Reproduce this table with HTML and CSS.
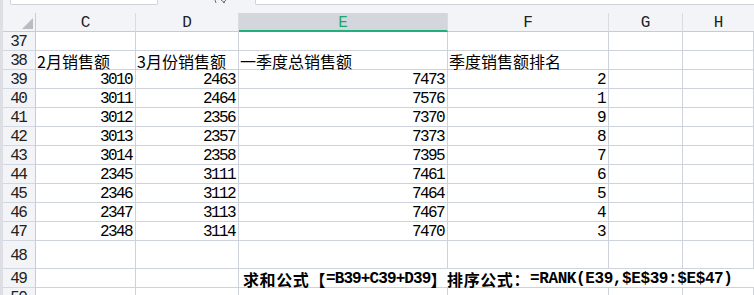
FILE: index.html
```html
<!DOCTYPE html>
<html lang="zh-CN">
<head>
<meta charset="utf-8">
<title>Sheet</title>
<link rel="stylesheet" href="styles.css">
</head>
<body>
<div class="app">
  <div class="topbar">
    <div class="namebox"></div>
    <div class="fx"><svg width="16" height="4" viewBox="0 0 16 4"><path d="M2 0 L3 3 M8 0 L12 3 M13 0 L10 3" stroke="#6b6f78" stroke-width="1" fill="none"/></svg></div>
    <div class="formula"></div>
  </div>
  <div class="sheet">
    <div class="corner"><svg width="11" height="11" viewBox="0 0 11 11"><polygon points="11,0 11,11 0,11" fill="#b9bcc4"/></svg></div>
    <div class="ch">C</div><div class="ch">D</div><div class="ch sel">E</div><div class="ch">F</div><div class="ch">G</div><div class="ch last">H</div>

    <div class="rh">37</div><div class="c"></div><div class="c"></div><div class="c"></div><div class="c"></div><div class="c"></div><div class="c"></div>

    <div class="rh">38</div><div class="c t">2月销售额</div><div class="c t">3月份销售额</div><div class="c t">一季度总销售额</div><div class="c t">季度销售额排名</div><div class="c"></div><div class="c"></div>

    <div class="rh">39</div><div class="c n">3010</div><div class="c n">2463</div><div class="c n">7473</div><div class="c n">2</div><div class="c"></div><div class="c"></div>
    <div class="rh">40</div><div class="c n">3011</div><div class="c n">2464</div><div class="c n">7576</div><div class="c n">1</div><div class="c"></div><div class="c"></div>
    <div class="rh">41</div><div class="c n">3012</div><div class="c n">2356</div><div class="c n">7370</div><div class="c n">9</div><div class="c"></div><div class="c"></div>
    <div class="rh">42</div><div class="c n">3013</div><div class="c n">2357</div><div class="c n">7373</div><div class="c n">8</div><div class="c"></div><div class="c"></div>
    <div class="rh">43</div><div class="c n">3014</div><div class="c n">2358</div><div class="c n">7395</div><div class="c n">7</div><div class="c"></div><div class="c"></div>
    <div class="rh">44</div><div class="c n">2345</div><div class="c n">3111</div><div class="c n">7461</div><div class="c n">6</div><div class="c"></div><div class="c"></div>
    <div class="rh">45</div><div class="c n">2346</div><div class="c n">3112</div><div class="c n">7464</div><div class="c n">5</div><div class="c"></div><div class="c"></div>
    <div class="rh">46</div><div class="c n">2347</div><div class="c n">3113</div><div class="c n">7467</div><div class="c n">4</div><div class="c"></div><div class="c"></div>
    <div class="rh">47</div><div class="c n">2348</div><div class="c n">3114</div><div class="c n">7470</div><div class="c n">3</div><div class="c"></div><div class="c"></div>

    <div class="rh">48</div><div class="c"></div><div class="c"></div><div class="c"></div><div class="c"></div><div class="c"></div><div class="c"></div>

    <div class="rh">49</div><div class="c"></div><div class="c"></div>
    <div class="c formula-note"><span class="zh">求和公式【</span><span class="en">=B39+C39+D39</span><span class="zh">】排序公式：</span><span class="en wide">=RANK(E39,$E$39:$E$47)</span></div>

    <div class="rh">50</div><div class="c"></div><div class="c"></div><div class="c"></div><div class="c"></div><div class="c"></div><div class="c"></div>
  </div>
</div>
</body>
</html>
```

FILE: styles.css
```css
* { box-sizing: border-box; }
html, body { margin: 0; padding: 0; background: #ffffff; overflow: hidden; }
body { width: 754px; height: 295px; }

.app {
  border-left: 3px solid #dddfe4;
  height: 295px;
  overflow: hidden;
  font-family: "Noto Sans CJK SC", sans-serif;
  color: #000;
}

.topbar {
  height: 13px;
  background: #f3f4f7;
  display: flex;
  align-items: flex-start;
}
.namebox {
  margin-left: 7px;
  width: 148px;
  height: 5px;
  background: #fff;
  border: 1px solid #cfd2d9;
  border-top: none;
  border-radius: 0 0 2px 2px;
}
.fx {
  margin-left: 55px;
  width: 16px;
  height: 4px;
  display: flex;
}
.formula {
  margin-left: 26px;
  flex: 1;
  height: 5px;
  background: #fff;
  border: 1px solid #cfd2d9;
  border-top: none;
  border-right: none;
  border-radius: 0 0 0 2px;
}

.sheet {
  display: grid;
  grid-template-columns: 33px 100px 103px 209px 161px 74px 1fr;
  grid-template-rows: repeat(12, 19px) 28px 19px 19px;
}

.corner {
  background: #f3f4f7;
  border-right: 1px solid #c6cbd6;
  border-bottom: 1px solid #c6cbd6;
  display: flex;
  justify-content: flex-end;
  align-items: flex-end;
  padding: 0 2px 2px 0;
}

.ch {
  background: #f3f4f7;
  border-right: 1px solid #d9dce3;
  border-bottom: 1px solid #c6cbd6;
  display: flex;
  justify-content: center;
  align-items: center;
  padding-top: 1px;
  font-family: "Liberation Mono", monospace;
  font-size: 16px;
  color: #222;
}
.ch.last { border-right: none; }
.ch.sel {
  background: #d3d6dd;
  color: #1ea76b;
  border-bottom: 2px solid #1fb17b;
  padding-top: 2px;
}

.rh {
  background: #f3f4f7;
  border-right: 1px solid #c6cbd6;
  border-bottom: 1px solid #d3d7df;
  display: flex;
  justify-content: center;
  align-items: center;
  padding-top: 2px;
  font-family: "Liberation Mono", monospace;
  font-size: 16px;
  letter-spacing: -1.6px;
  text-indent: -1.6px;
  color: #222;
}

.c {
  border-right: 1px solid #cdd2dd;
  border-bottom: 1px solid #cdd2dd;
  display: flex;
  align-items: center;
  padding: 2px 2px 0 2px;
  white-space: nowrap;
  font-size: 16px;
  line-height: 16px;
}
.c.t {
  padding-left: 1px;
  font-family: "Noto Sans CJK SC", sans-serif;
}
.c.n {
  justify-content: flex-end;
  padding-right: 3px;
  font-family: "Liberation Mono", monospace;
  letter-spacing: -1.6px;
}

.formula-note {
  grid-column: span 4;
  border-right: none;
  padding-left: 4px;
  font-weight: bold;
}
.formula-note .zh {
  font-family: "Noto Sans CJK SC", sans-serif;
  letter-spacing: 0.6px;
}
.formula-note .en {
  font-family: "Liberation Mono", monospace;
  letter-spacing: -0.9px;
}
.formula-note .en.wide {
  letter-spacing: -0.4px;
}
```
